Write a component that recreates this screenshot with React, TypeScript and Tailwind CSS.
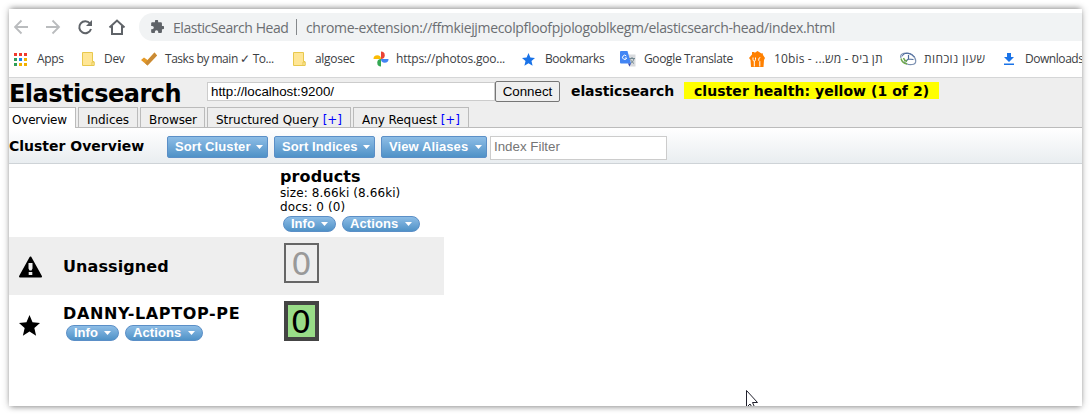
import React from "react";

const UI = "font-['Open_Sans','Noto_Sans',sans-serif]";

function Folder() {
  return (
    <svg width="13" height="15" viewBox="0 0 13 15">
      <path d="M.5.5h10v9h1.5v4H.5z" fill="#ffe695" stroke="#e8c84d" />
      <path d="M10 13.5v-3.5h2v3.500z" fill="#fff0b8" stroke="#e8c84d" />
    </svg>
  );
}

function Apps() {
  const colors = ["#f03a2e", "#f03a2e", "#f03a2e", "#2f9e58", "#1a85f0", "#f2b100", "#2f9e58", "#f2b100", "#f2b100"];
  return (
    <div className="grid grid-cols-[3px_3px_3px] gap-[2px]">
      {colors.map((c, i) => (
        <i key={i} className="h-[3px] w-[3px]" style={{ background: c }} />
      ))}
    </div>
  );
}

function Check() {
  return (
    <svg width="16" height="14" viewBox="0 0 16 14">
      <path d="M0 8l3-2.500 3.500 2.500L13.500.5 16 3.500 6.500 13.500z" fill="#e59a27" />
      <path d="M6.500 8.500L13.500.5 16 3.500 6.500 13.500 4 11z" fill="#c98a35" />
    </svg>
  );
}

function Photos() {
  return (
    <svg width="16" height="16" viewBox="0 0 16 16">
      <path d="M8 8V.5a3.700 3.700 0 0 1 0 7.500z" fill="#ea4335" />
      <path d="M8 8h7.500a3.700 3.700 0 0 1-7.500 0z" fill="#4285f4" />
      <path d="M8 8v7.500a3.700 3.700 0 0 1 0-7.500z" fill="#34a853" />
      <path d="M8 8H.5a3.700 3.700 0 0 1 7.500 0z" fill="#fbbc04" />
    </svg>
  );
}

function StarShape({ size, color }: { size: number; color: string }) {
  return (
    <svg width={size} height={size} viewBox="0 0 20 20">
      <path d="M10 0l2.900 6.900 7.100.6-5.400 4.900 1.700 7.400L10 15.800l-6.300 4 1.700-7.400L0 7.500l7.100-.6z" fill={color} />
    </svg>
  );
}

function Translate() {
  return (
    <svg width="16" height="16" viewBox="0 0 16 16">
      <path d="M6 3.500h9.500v12H9z" fill="#d8dadd" />
      <path d="M9 7.500h6M12 6v1.500M14 7.500c-.5 2.500-2 4-3.500 5M10.500 8.500c1 2 2.200 3 3.500 4" stroke="#70868f" fill="none" />
      <path d="M1 0h6.500L11 12.500H1q-1 0-1-1V1q0-1 1-1z" fill="#4285f4" />
      <path d="M8 12.500h3L9.500 15.500z" fill="#3848b0" />
      <path d="M6.300 5a2.100 2.100 0 1 0 .4 2H4.800" stroke="#fff" fill="none" />
    </svg>
  );
}

function FoodHouse() {
  return (
    <svg width="16" height="16" viewBox="0 0 16 16">
      <path d="M0 7L3 3.500V1h2.500v1L8.500 0l4 2.500 1-.5.5 2 2 3-1 2-.5 7H2l-.500-7z" fill="#ff8000" />
      <path d="M4 6.500v2q0 1.500 1.300 1.500V15.500M6.500 6.500v2q0 1.500-1.200 1.500M10.800 15.500v-5l-1-1V8q.2-1.500 1.500-1.500" fill="none" stroke="#fff" />
    </svg>
  );
}

function AttendanceClock() {
  return (
    <svg width="17" height="14" viewBox="0 0 17 14" fill="none">
      <path d="M1 6C-1 1 7-.5 12 3s5 9 0 9.500-7-1.500-8-3" stroke="#7c91b2" strokeWidth="1.200" />
      <path d="M2 4.500C4 0 11 0 14.500 5" stroke="#45659a" />
      <path d="M8.500 3v4l5 .5M8.500 7L6 9" stroke="#4e6b99" strokeWidth="1.200" />
      <path d="M1 6.500q1 4.500 6 5.500M3.500 6q.5 2.500 3.500 3.500" stroke="#6ea84d" strokeWidth="1.400" />
    </svg>
  );
}

function Download() {
  return (
    <svg width="10" height="12" viewBox="0 0 10 12">
      <path d="M3 0h4v4h3L5 9 0 4h3zM0 10.500h10V12H0z" fill="#1a73e8" />
    </svg>
  );
}

function Bookmark({ icon, label, width, gap, spacing, rtl }: { icon: React.ReactNode; label: string; width: string; gap: string; spacing: string; rtl?: boolean }) {
  return (
    <div className={`flex shrink-0 items-center ${width}`}>
      <div className={`flex shrink-0 items-center ${gap}`}>{icon}</div>
      <span dir={rtl ? "rtl" : undefined} className={`whitespace-nowrap ${spacing}`}>
        {label}
      </span>
    </div>
  );
}

function Caret() {
  return (
    <svg width="7" height="4" viewBox="0 0 7 4">
      <path d="M0 0h7L3.500 4z" fill="#fff" />
    </svg>
  );
}

const blue = "flex shrink-0 items-center justify-between border border-[#5b8fc7] bg-linear-to-b from-[#8dbde6] to-[#4f92c7] font-['Liberation_Sans',Arial,sans-serif] text-[13px] font-bold text-white whitespace-nowrap";

function MenuButton({ label, width }: { label: string; width: string }) {
  return (
    <div className={`${blue} ${width} h-[22px] rounded-[2px] pr-1 pl-[7px] tracking-[0.1px]`}>
      <span>{label}</span>
      <Caret />
    </div>
  );
}

function Pills() {
  return (
    <div className="flex gap-[6px]">
      <div className={`${blue} h-4 w-[53px] rounded-full pr-[7px] pl-[7px] leading-[14px]`}>
        <span>Info</span>
        <Caret />
      </div>
      <div className={`${blue} h-4 w-[78px] rounded-full pr-[7px] pl-[7px] leading-[14px] tracking-[0.1px]`}>
        <span>Actions</span>
        <Caret />
      </div>
    </div>
  );
}

function Tab({ children, width, spacing, active }: { children: React.ReactNode; width: string; spacing: string; active?: boolean }) {
  return (
    <div
      className={`${width} ${spacing} shrink-0 whitespace-nowrap border-t border-r border-[#bbb] text-[12px] leading-[24px] ${
        active ? "h-[21px] bg-white pl-[3px]" : "h-5 border-l pl-2"
      }`}
    >
      {children}
    </div>
  );
}

export default function App() {
  return (
    <div className="h-[414px] w-[1090px] overflow-hidden bg-white p-[9px_8px_8px_9px]">
      <div className="h-[397px] w-[1073px] shadow-[0_-3px_5px_-2px_rgba(0,0,0,0.32),0_3px_5px_-2px_rgba(0,0,0,0.32),0_0_7px_1px_rgba(0,0,0,0.16)]">
        <div className="relative flex h-full w-full flex-col overflow-hidden bg-white font-['DejaVu_Sans',Verdana,sans-serif] text-black">
          <div className={`flex h-8 shrink-0 items-end ${UI}`}>
            <div className="flex h-7 w-[130px] shrink-0 items-center pl-[5px]">
              <svg width="112" height="16" viewBox="0 0 112 16" fill="none">
                <path d="M14 8H1.500M7.500 1.500L1 8l6.500 6.500" stroke="#babcbe" strokeWidth="1.800" />
                <path d="M32 8h12.500M38.500 1.500L45 8l-6.500 6.500" stroke="#babcbe" strokeWidth="1.800" />
                <path d="M76 4.500A6 6 0 1 0 77 10" stroke="#5f6368" strokeWidth="2" />
                <path d="M78 1v6h-6z" fill="#5f6368" />
                <path d="M95.500 8.500L103 1.500l7.500 7M98 7v8h10V7" stroke="#5f6368" strokeWidth="2" />
              </svg>
            </div>
            <div className="flex h-7 flex-1 items-center rounded-l-full bg-[#f1f3f4] pl-3 text-[14px] text-[#6b6e72]">
              <svg width="13" height="13" viewBox="2 1.500 20 20.500" className="-mt-0.5 mr-[9px] shrink-0">
                <path
                  d="M20.500 11H19V7c0-1.100-.9-2-2-2h-4V3.500a2.500 2.500 0 0 0-5 0V5H4c-1.100 0-2 .9-2 2v3.800h1.500a2.700 2.700 0 0 1 0 5.400H2V20c0 1.100.9 2 2 2h3.800v-1.500a2.700 2.700 0 0 1 5.400 0V22H17c1.100 0 2-.9 2-2v-4h1.500a2.500 2.500 0 0 0 0-5z"
                  fill="#5f6368"
                />
              </svg>
              <span className="w-[123px] shrink-0 whitespace-nowrap tracking-[-0.45px]">ElasticSearch Head</span>
              <span className="mr-[9px] h-4 w-px bg-[#85888b]" />
              <span className="whitespace-nowrap tracking-[-0.34px]">chrome-extension://ffmkiejjmecolpfloofpjologoblkegm/elasticsearch-head/index.html</span>
            </div>
          </div>
          <div className={`flex h-9 shrink-0 items-center overflow-hidden pl-[5px] text-[12px] text-[#3c4043] ${UI}`}>
            <Bookmark icon={<Apps />} label="Apps" width="w-[68px]" gap="w-[23px]" spacing="tracking-[-0.3px]" />
            <Bookmark icon={<Folder />} label="Dev" width="w-[59px]" gap="w-[22px]" spacing="tracking-[-0.3px]" />
            <Bookmark icon={<Check />} label="Tasks by main ✓ To..." width="w-[152px]" gap="w-6" spacing="tracking-[-0.46px]" />
            <Bookmark icon={<Folder />} label="algosec" width="w-[80px]" gap="w-[22px]" spacing="tracking-[-0.3px]" />
            <Bookmark icon={<Photos />} label="https://photos.goo..." width="w-[149px]" gap="w-[23px]" spacing="tracking-[-0.22px]" />
            <Bookmark icon={<StarShape size={13} color="#1a73e8" />} label="Bookmarks" width="w-[98px]" gap="w-[23px]" spacing="tracking-[-0.45px]" />
            <Bookmark icon={<Translate />} label="Google Translate" width="w-[129px]" gap="w-6" spacing="tracking-[-0.35px]" />
            <Bookmark icon={<FoodHouse />} label="תן ביס - מש... - 10bis" width="w-[151px]" gap="w-[25px]" spacing="tracking-[0.15px]" rtl />
            <Bookmark icon={<AttendanceClock />} label="שעון נוכחות" width="w-[104px]" gap="w-6" spacing="tracking-[0.4px]" rtl />
            <Bookmark icon={<Download />} label="Downloads" width="w-[90px]" gap="w-[21px]" spacing="tracking-[-0.45px]" />
          </div>

          <div className="flex h-[51px] shrink-0 flex-col border-t border-b border-t-[#d5d6d7] border-b-[#bbb] bg-[#eee]">
            <div className="flex h-[29px] shrink-0 items-start text-[14px] font-bold">
              <h1 className="w-[198px] shrink-0 text-[24px] leading-[33px] tracking-[-0.53px]">Elasticsearch</h1>
              <div className="mt-[4px] h-[19px] w-[288px] shrink-0 border border-[#ccc] bg-white pl-[3px] font-['Liberation_Sans',Arial,sans-serif] text-[13.333px] leading-[18px] font-normal">
                http://localhost:9200/
              </div>
              <div className="mt-[3px] h-[21px] w-[65px] shrink-0 rounded-[2px] border border-[#767676] bg-[#efefef] text-center font-['Liberation_Sans',Arial,sans-serif] text-[13.333px] leading-[19px] font-normal">
                Connect
              </div>
              <span className="mt-[4px] ml-[11px] w-[113px] shrink-0 leading-[18px] tracking-[-0.1px]">elasticsearch</span>
              <span className="mt-[4px] h-[17px] w-[255px] shrink-0 bg-[#ff0] pl-[10px] leading-[18px] tracking-[0.05px] whitespace-nowrap">cluster health: yellow (1 of 2)</span>
            </div>
            <div className="flex h-5 shrink-0 gap-[2px]">
              <Tab width="w-[67px]" spacing="tracking-[-0.2px]" active>Overview</Tab>
              <Tab width="w-[60px]" spacing="tracking-[-0.05px]">Indices</Tab>
              <Tab width="w-[65px]" spacing="tracking-[-0.1px]">Browser</Tab>
              <Tab width="w-[144px]" spacing="tracking-[-0.05px]">
                Structured Query <span className="text-[#00f]">[+]</span>
              </Tab>
              <Tab width="w-[116px]" spacing="tracking-[-0.05px]">
                Any Request <span className="text-[#00f]">[+]</span>
              </Tab>
            </div>
          </div>

          <div className="flex h-9 shrink-0 items-start border-b border-[#ced3d7] bg-linear-to-b from-white to-[#e9edf0] pt-2">
            <h2 className="w-[158px] shrink-0 text-[14px] leading-[20px] font-bold whitespace-nowrap">Cluster Overview</h2>
            <div className="flex shrink-0 gap-[6px]">
              <MenuButton label="Sort Cluster" width="w-[101px]" />
              <MenuButton label="Sort Indices" width="w-[101px]" />
              <MenuButton label="View Aliases" width="w-[106px]" />
            </div>
            <div className="ml-[3px] h-6 w-[177px] shrink-0 border border-[#ccc] bg-white pl-[3px] font-['Liberation_Sans',Arial,sans-serif] text-[13.333px] leading-[20px] text-[#757575]">
              Index Filter
            </div>
          </div>

          <div className="flex w-[435px] flex-col text-[16px] font-bold">
            <div className="flex h-[73px] flex-col pt-[3px] pl-[271px]">
              <div className="leading-[20px] tracking-[0.1px]">products</div>
              <div className="-mt-px text-[12px] leading-[14px] font-normal tracking-[0.1px]">size: 8.66ki (8.66ki)</div>
              <div className="mb-[2px] text-[12px] leading-[14px] font-normal tracking-[0.1px]">docs: 0 (0)</div>
              <div className="pl-[3px]">
                <Pills />
              </div>
            </div>
            <div className="flex h-[58px] bg-[#eee]">
              <div className="w-[54px] shrink-0 pt-[19px] pl-[10px]">
                <svg width="23" height="22" viewBox="0 0 23 22">
                  <path d="M11.500 1.500L22 20.500H1z" fill="#000" stroke="#000" strokeWidth="2" strokeLinejoin="round" />
                  <path d="M9.500 7h4v5.500l-1 2h-2l-1-2zM9.700 16h3.600v3H9.700z" fill="#eee" />
                </svg>
              </div>
              <div className="w-[221px] shrink-0 leading-[60px] tracking-[0.1px]">Unassigned</div>
              <div className="mt-[6px] h-10 w-[35px] border-2 border-[#666] text-center text-[32px] leading-[38px] font-normal text-[#999]">0</div>
            </div>
            <div className="flex h-[58px]">
              <div className="w-[54px] shrink-0 pt-[20px] pl-[10px]">
                <StarShape size={21} color="#000" />
              </div>
              <div className="w-[221px] shrink-0 pt-[8px]">
                <div className="leading-[22px] tracking-[0.62px] whitespace-nowrap">DANNY-LAPTOP-PE</div>
                <div className="pl-[3px]">
                  <Pills />
                </div>
              </div>
              <div className="mt-[6px] h-10 w-[35px] border-4 border-[#444] bg-[#9d8] text-center text-[32px] leading-[35px] font-normal">
                <span className="-ml-[1px]">0</span>
              </div>
            </div>
          </div>

          <svg className="absolute top-[381px] left-[737px]" width="13" height="16" viewBox="0 0 13 16">
            <path d="M.5.5v17L4 14l2.500 4 2-1-2-4.500h5z" fill="#fff" stroke="#20202c" />
          </svg>
        </div>
      </div>
    </div>
  );
}
